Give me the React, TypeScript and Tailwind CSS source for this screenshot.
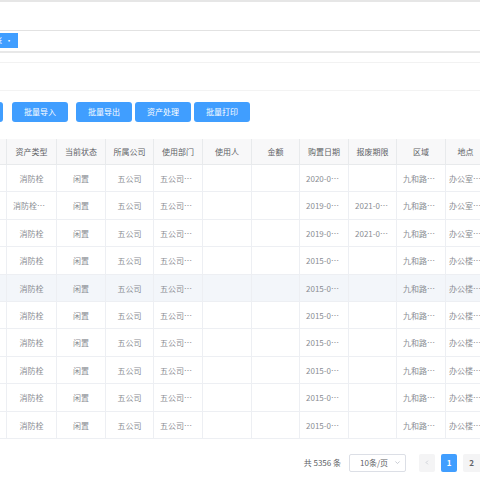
import React from "react";

type Row = {
  type: string;
  status: string;
  company: string;
  dept: string;
  user: string;
  amount: string;
  date: string;
  scrap: string;
  region: string;
  place: string;
};

const headers = ["资产类型", "当前状态", "所属公司", "使用部门", "使用人", "金额", "购置日期", "报废期限", "区域", "地点"];

const base: Row = {
  type: "消防栓",
  status: "闲置",
  company: "五公司",
  dept: "五公司综合部",
  user: "",
  amount: "",
  date: "2015-06-18",
  scrap: "",
  region: "九和路一号",
  place: "办公楼一层",
};

const rows: Row[] = [
  { ...base, date: "2020-03-12", place: "办公室101" },
  { ...base, type: "消防栓箱体", date: "2019-08-20", scrap: "2021-08-20", place: "办公室102" },
  { ...base, date: "2019-08-20", scrap: "2021-08-20", place: "办公室103" },
  { ...base },
  { ...base },
  { ...base },
  { ...base },
  { ...base },
  { ...base },
  { ...base },
];

const Btn = ({ children, className = "" }: { children?: React.ReactNode; className?: string }) => (
  <div
    className={
      "h-[20px] w-[56px] shrink-0 rounded-[3px] bg-[#409eff] text-white text-[8px] flex items-center justify-center " +
      className
    }
  >
    {children}
  </div>
);

export default function App() {
  return (
    <div className="w-[480px] h-[480px] overflow-hidden bg-white font-['Noto_Sans_CJK_SC',sans-serif] text-[8px]">
      {/* top navbar */}
      <div className="h-[2px] bg-[#e6e6e6]" />
      <div className="h-[28px] bg-white" />
      <div className="h-[1px] bg-[#e2e2e2]" />
      {/* tags view */}
      <div className="h-[20px] bg-white pt-[2px]">
        <div className="w-[18px] h-[15px] bg-[#409eff] overflow-hidden flex justify-end items-center pr-[5px] gap-[3px] text-white text-[7px] whitespace-nowrap">
          <span>资产台账</span>
          <span className="text-[8px] leading-none">·</span>
        </div>
      </div>
      <div className="h-[2px] bg-[#e8e8e8]" />
      <div className="h-[9px]" />
      <div className="h-[1px] bg-[#f2f2f2]" />
      <div className="h-[27px]" />
      <div className="h-[1px] bg-[#f3f3f3]" />
      <div className="h-[11px]" />
      {/* buttons */}
      <div className="flex items-center h-[20px]">
        <Btn className="ml-[-53px]">新增</Btn>
        <Btn className="ml-[9px]">批量导入</Btn>
        <Btn className="ml-[8px]">批量导出</Btn>
        <Btn className="ml-[3px] w-[55px]">资产处理</Btn>
        <Btn className="ml-[3px]">批量打印</Btn>
      </div>
      <div className="h-[17px]" />
      {/* table */}
      <div className="grid grid-cols-[7px_50px_49px_48px_49px_49px_48px_49px_48px_49px_40px] w-[486px]">
        <div className="h-[26px] bg-[#f8f8f9] border-r border-b border-[#e8eaec]" />
        {headers.map((h, j) => (
          <div
            key={h}
            className={
              "h-[26px] leading-[26px] bg-[#f8f8f9] border-r border-b border-[#e8eaec] text-center text-[#606266] truncate " +
              (j === 9 ? "px-[3px]" : "px-[5px]")
            }
          >
            {h}
          </div>
        ))}
        {rows.map((r, i) => {
          const bg = i === 4 ? "bg-[#f3f6fa]" : "bg-white";
          const cells = [r.type, r.status, r.company, r.dept, r.user, r.amount, r.date, r.scrap, r.region, r.place];
          return (
            <React.Fragment key={i}>
              <div className={"h-[27.4px] border-r border-b border-[#edeff3] " + bg} />
              {cells.map((c, j) => (
                <div
                  key={j}
                  className={
                    "h-[27.4px] leading-[27px] border-r border-b border-[#edeff3] text-center text-[#8a8d93] truncate " +
                    (j === 9 ? "px-[3px] " : "px-[6px] ") +
                    bg
                  }
                >
                  {c}
                </div>
              ))}
            </React.Fragment>
          );
        })}
      </div>
      {/* pagination */}
      <div className="flex justify-end items-center pt-[15px] text-[#606266]">
        <span className="mr-[8px] text-[8px]">共 5356 条</span>
        <div className="w-[57px] h-[18px] border border-[#dcdfe6] rounded-[2px] flex items-center justify-between pl-[10px] pr-[4px] text-[8px] text-[#606266]">
          <span>10条/页</span>
          <svg width="7" height="7" viewBox="0 0 10 10" fill="none" stroke="#c0c4cc" strokeWidth="1.2">
            <path d="M2 3.5 L5 6.5 L8 3.5" />
          </svg>
        </div>
        <div className="ml-[13px] w-[16px] h-[18px] rounded-[2px] bg-[#f4f4f5] flex items-center justify-center">
          <svg width="6" height="7" viewBox="0 0 10 10" fill="none" stroke="#c0c4cc" strokeWidth="1.2">
            <path d="M6.5 2 L3.5 5 L6.5 8" />
          </svg>
        </div>
        <div className="ml-[6px] w-[16px] h-[18px] rounded-[2px] bg-[#409eff] text-white flex items-center justify-center font-bold">
          1
        </div>
        <div className="ml-[6px] w-[17px] h-[18px] rounded-l-[2px] bg-[#f4f4f5] text-[#606266] flex items-center justify-center font-bold">
          2
        </div>
      </div>
    </div>
  );
}
